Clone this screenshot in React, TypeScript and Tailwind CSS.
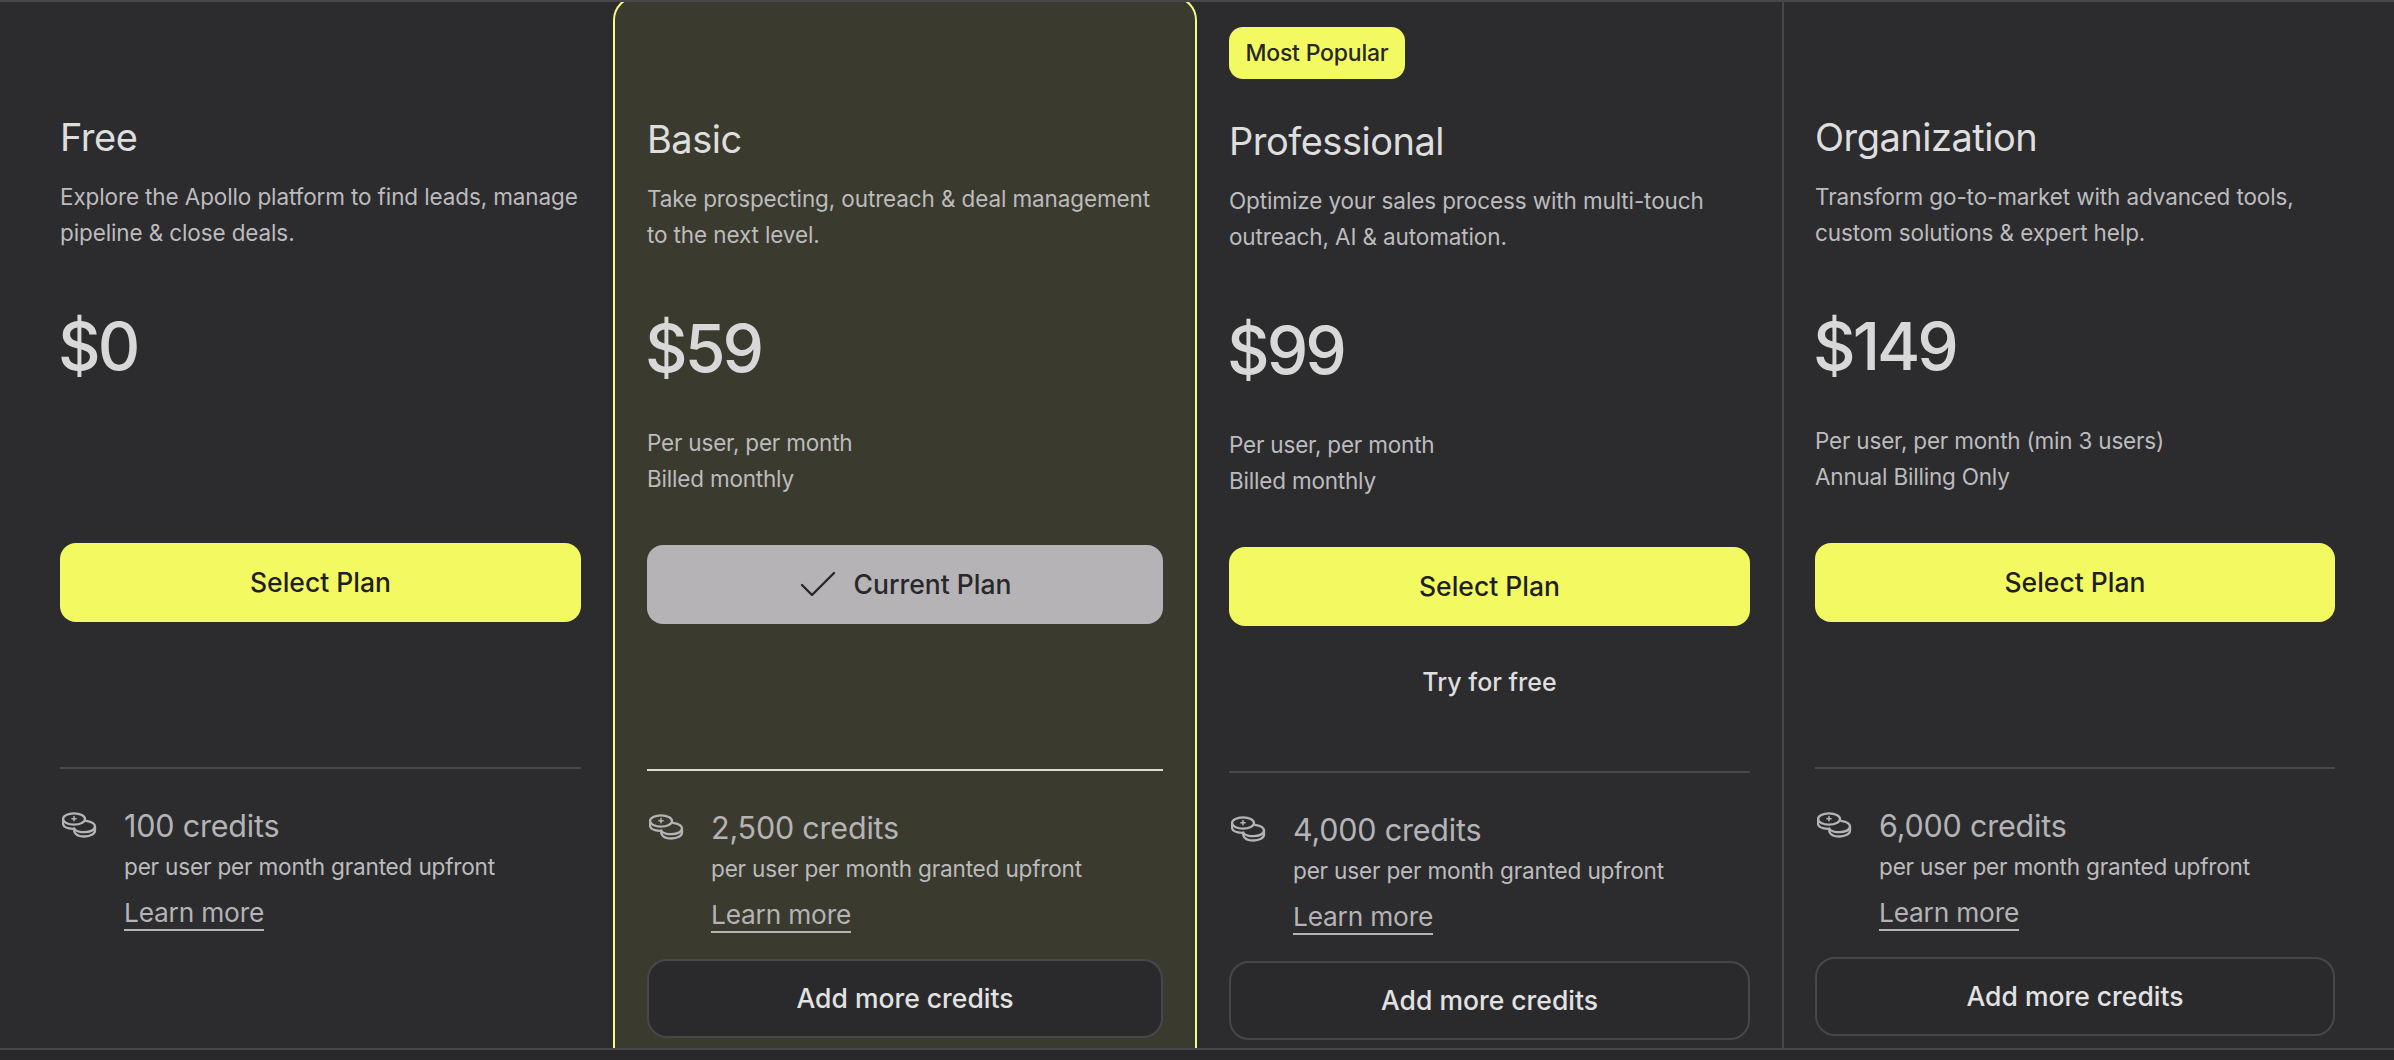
import { Check } from 'lucide-react';

interface Plan {
    name: string;
    desc: string[];
    price: string;
    note: string[];
    credits: string;
    wrap: string;
    current?: boolean;
    popular?: boolean;
    trial?: boolean;
    addMore?: boolean;
}

const plans: Plan[] = [
    {
        name: 'Free',
        desc: ['Explore the Apollo platform to find leads, manage', 'pipeline & close deals.'],
        price: '$0',
        note: [],
        credits: '100 credits',
        wrap: 'pt-[113px] pl-[60px] pr-[32px]',
    },
    {
        name: 'Basic',
        desc: ['Take prospecting, outreach & deal management', 'to the next level.'],
        price: '$59',
        note: ['Per user, per month', 'Billed monthly'],
        credits: '2,500 credits',
        wrap: '-mt-[6px] pt-[119px] px-[32px] bg-[#3a3a2e] border-x-2 border-t-2 border-[#f3fa8c] rounded-t-[24px]',
        current: true,
        addMore: true,
    },
    {
        name: 'Professional',
        desc: ['Optimize your sales process with multi-touch', 'outreach, AI & automation.'],
        price: '$99',
        note: ['Per user, per month', 'Billed monthly'],
        credits: '4,000 credits',
        wrap: 'pt-[25px] px-[32px] border-r-2 border-[#47474b]',
        popular: true,
        trial: true,
        addMore: true,
    },
    {
        name: 'Organization',
        desc: ['Transform go-to-market with advanced tools,', 'custom solutions & expert help.'],
        price: '$149',
        note: ['Per user, per month (min 3 users)', 'Annual Billing Only'],
        credits: '6,000 credits',
        wrap: 'pt-[113px] pl-[31px] pr-[59px]',
        addMore: true,
    },
];

function CoinsIcon() {
    return (
        <svg width="36" height="26" viewBox="0 0 36 26" fill="none" stroke="currentColor" strokeWidth="2.3" strokeLinecap="round" strokeLinejoin="round" className="shrink-0">
            <ellipse cx="12" cy="7" rx="11" ry="5.6" />
            <path d="M12 4.6v4.2M9.9 6.7h4.2" strokeWidth="1.5" />
            <path d="M1 7v4.4c0 3 4.2 5 10 5.4" />
            <path d="M24 8.8c5 .8 9 3 9 5.8 0 3.3-4.8 5.6-10.5 5.6-4.6 0-8.2-1.2-10-3" />
            <path d="M33 14.6v4c0 3.4-4.8 5.9-10.5 5.9-5.2 0-9.4-2-10.2-5v-3" />
        </svg>
    );
}

function PlanColumn({ plan }: { plan: Plan }) {
    const line = plan.current ? 'bg-[#dcdcd2]' : 'bg-[#47474b]';

    return (
        <div className={`flex flex-col ${plan.wrap}`}>
            {plan.popular && (
                <div className="mb-[40px] flex h-[52px] w-[176px] items-center justify-center rounded-[14px] bg-[#f3fa61] text-[23px] font-medium tracking-[-0.2px] text-[#28282a]">
                    Most Popular
                </div>
            )}
            <h2 className="h-[44px] text-[38px] leading-[44px] font-normal tracking-[-0.5px] text-[#dedede]">{plan.name}</h2>
            <div className="mt-[20px] h-[72px] text-[22.5px] leading-[36px] tracking-[-0.12px] whitespace-nowrap text-[#bcbbbd]">
                {plan.desc.map((text) => (
                    <p key={text}>{text}</p>
                ))}
            </div>
            <div className="mt-[59px] -ml-[2px] h-[72px] text-[66px] leading-[72px] font-medium tracking-[-3px] text-[#d8d8d8]">{plan.price}</div>
            <div className="mt-[41px] h-[72px] text-[22.5px] leading-[36px] tracking-[-0.2px] whitespace-nowrap text-[#bcbbbd]">
                {plan.note.map((text) => (
                    <p key={text}>{text}</p>
                ))}
            </div>
            <div className="mt-[48px] h-[224px]">
                {plan.current ? (
                    <button className="flex h-[79px] w-full items-center justify-center gap-[20px] rounded-[16px] bg-[#b5b3b6] pl-[3px] text-[26.5px] font-medium text-[#28282a]">
                        <Check size={48} strokeWidth={1.2} className="-my-2 -mx-2" />
                        Current Plan
                    </button>
                ) : (
                    <button className="h-[79px] w-full rounded-[16px] bg-[#f3fa61] text-[26.5px] font-medium text-[#1f1f21]">Select Plan</button>
                )}
                {plan.trial && <div className="mt-[36px] text-center text-[25px] leading-[40px] font-medium text-[#dedede]">Try for free</div>}
            </div>
            <div className={`h-[2px] shrink-0 ${line}`} />
            <div className="mt-[38px] flex gap-[26px]">
                <div className="mt-[5px] ml-[2px] w-[36px] text-[#b5b3b6]">
                    <CoinsIcon />
                </div>
                <div className="flex flex-col items-start">
                    <div className="text-[30.5px] leading-[38px] tracking-[-0.2px] text-[#b5b3b6]">{plan.credits}</div>
                    <div className="mt-[7px] text-[22.6px] leading-[30px] tracking-[-0.2px] whitespace-nowrap text-[#bcbbbd]">per user per month granted upfront</div>
                    <a className="mt-[15px] border-b-2 border-[#b5b3b6] text-[26.3px] leading-[32px] tracking-[-0.2px] text-[#b5b3b6]">Learn more</a>
                </div>
            </div>
            {plan.addMore && (
                <button className="mt-[26px] h-[79px] w-full shrink-0 rounded-[20px] border-2 border-[#47474b] bg-[#2a2a2c] text-[26.5px] font-medium text-[#e2e2e2]">
                    Add more credits
                </button>
            )}
        </div>
    );
}

export default function App() {
    return (
        <div className="h-[1060px] w-[2394px] overflow-hidden bg-[#29292b] font-['Inter',sans-serif]">
            <div className="border-y-2 border-[#47474b] bg-[#2c2c2e]">
                <div className="grid h-[1046px] grid-cols-[613px_584px_587px_610px] overflow-hidden">
                    {plans.map((plan) => (
                        <PlanColumn key={plan.name} plan={plan} />
                    ))}
                </div>
            </div>
        </div>
    );
}
